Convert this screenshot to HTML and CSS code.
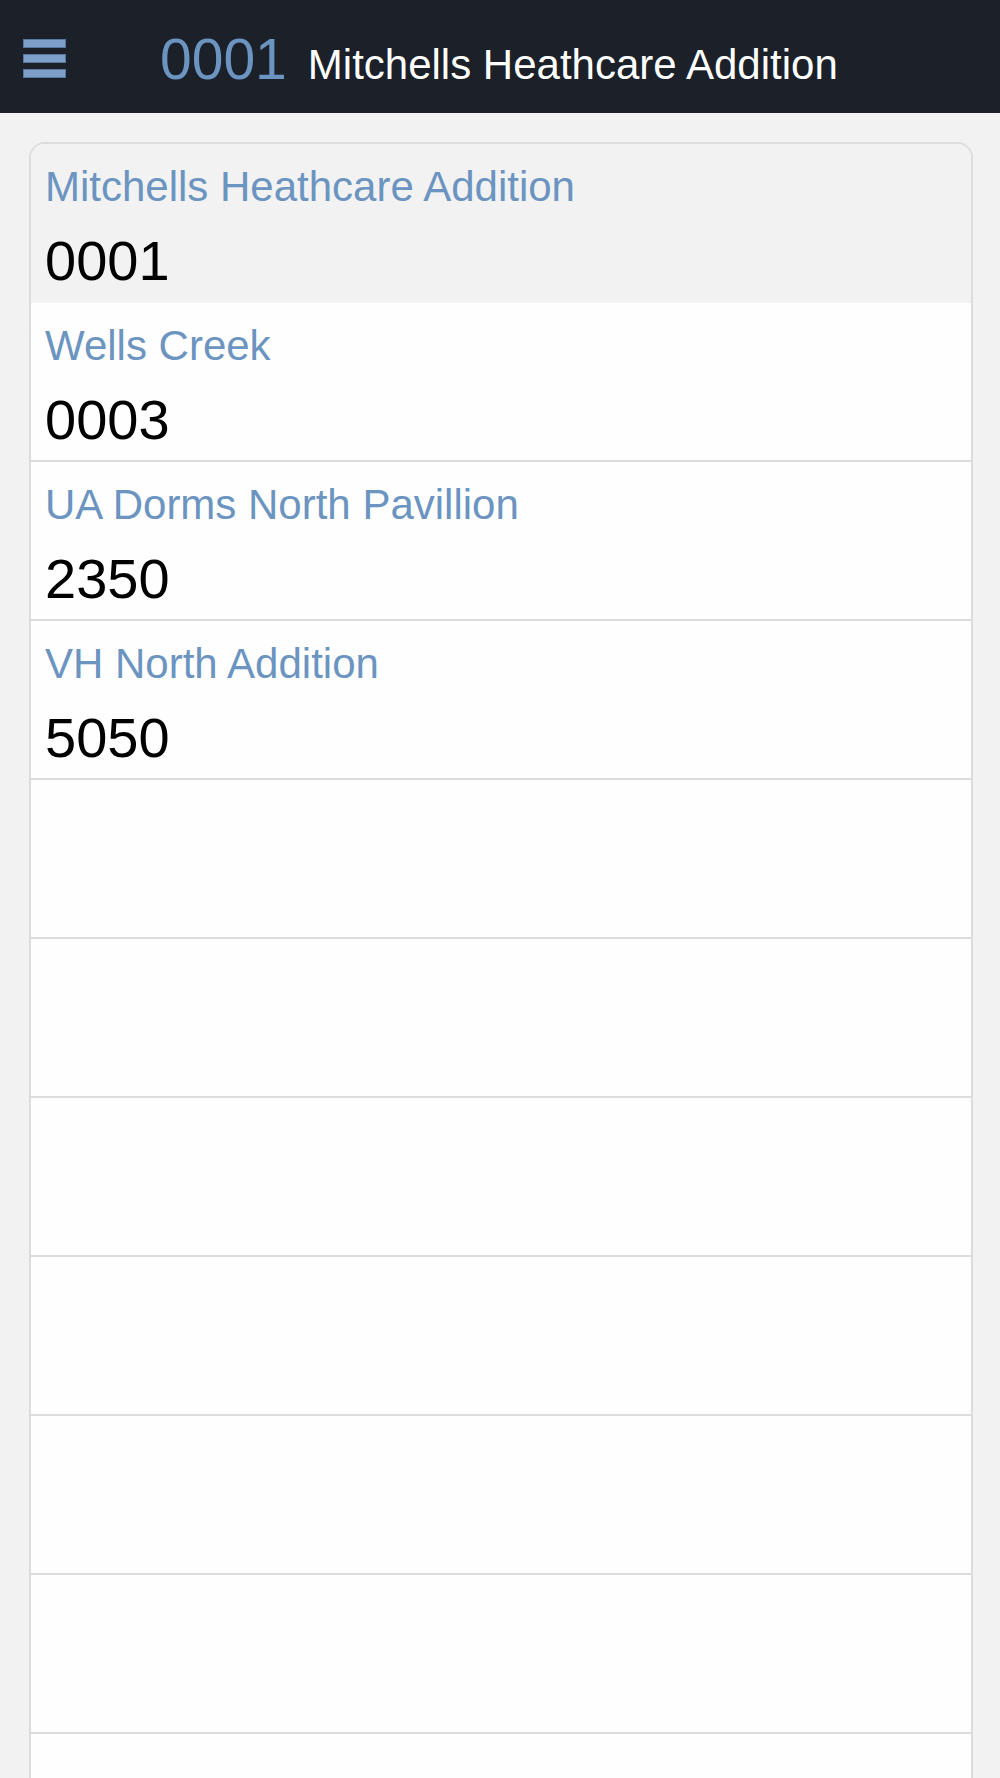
FILE: index.html
```html
<!DOCTYPE html>
<html lang="en">

<head>
    <meta charset="UTF-8">
    <meta name="viewport" content="width=device-width, initial-scale=1.0">
    <title>Jobs</title>
    <link rel="stylesheet" href="styles.css">
</head>

<body>
    <div class="header">
        <div class="menu">
            <span class="bar"></span>
            <span class="bar"></span>
            <span class="bar"></span>
        </div>
        <div class="title">
            <span class="title-num">0001</span>
            <span class="title-name">Mitchells Heathcare Addition</span>
        </div>
    </div>

    <div class="list">
        <div class="row selected">
            <div class="job-name">Mitchells Heathcare Addition</div>
            <div class="job-num">0001</div>
        </div>
        <div class="row">
            <div class="job-name">Wells Creek</div>
            <div class="job-num">0003</div>
        </div>
        <div class="row">
            <div class="job-name">UA Dorms North Pavillion</div>
            <div class="job-num">2350</div>
        </div>
        <div class="row">
            <div class="job-name">VH North Addition</div>
            <div class="job-num">5050</div>
        </div>
        <div class="row"></div>
        <div class="row"></div>
        <div class="row"></div>
        <div class="row"></div>
        <div class="row"></div>
        <div class="row"></div>
        <div class="row"></div>
    </div>
</body>

</html>
```

FILE: styles.css
```css
body {
    margin: 0;
    padding: 0;
    background-color: #f2f2f2;
    font-family: "Liberation Sans", Arial, sans-serif;
}

.header {
    height: 113px;
    background-color: #1b2029;
    display: flex;
    align-items: flex-start;
    padding-left: 23px;
}

.menu {
    margin-top: 39px;
    width: 43px;
    display: flex;
    flex-direction: column;
    gap: 6px;
}

.bar {
    display: block;
    height: 9px;
    background-color: #7d9fca;
    box-shadow: inset 0 0 0 1px #56779f;
}

.title {
    margin-top: 30px;
    margin-left: 94px;
    display: flex;
    align-items: baseline;
    line-height: 58px;
}

.title-num {
    font-size: 57px;
    color: #6b94c1;
}

.title-name {
    font-size: 42px;
    color: #ffffff;
    margin-left: 21px;
}

.list {
    margin: 29px 27px 0 29px;
    border: 2px solid #dcdcdc;
    border-radius: 16px;
    background-color: #fefefe;
    overflow: hidden;
}

.row {
    height: 139px;
    padding: 18px 14px 0 14px;
    border-bottom: 2px solid #dcdcdc;
}

.selected {
    background-color: #f2f2f2;
    border-bottom-color: #f2f2f2;
}

.job-name {
    font-size: 42px;
    line-height: 50px;
    color: #6b94c1;
}

.job-num {
    font-size: 56px;
    line-height: 64px;
    margin-top: 17px;
    color: #000000;
}
```
